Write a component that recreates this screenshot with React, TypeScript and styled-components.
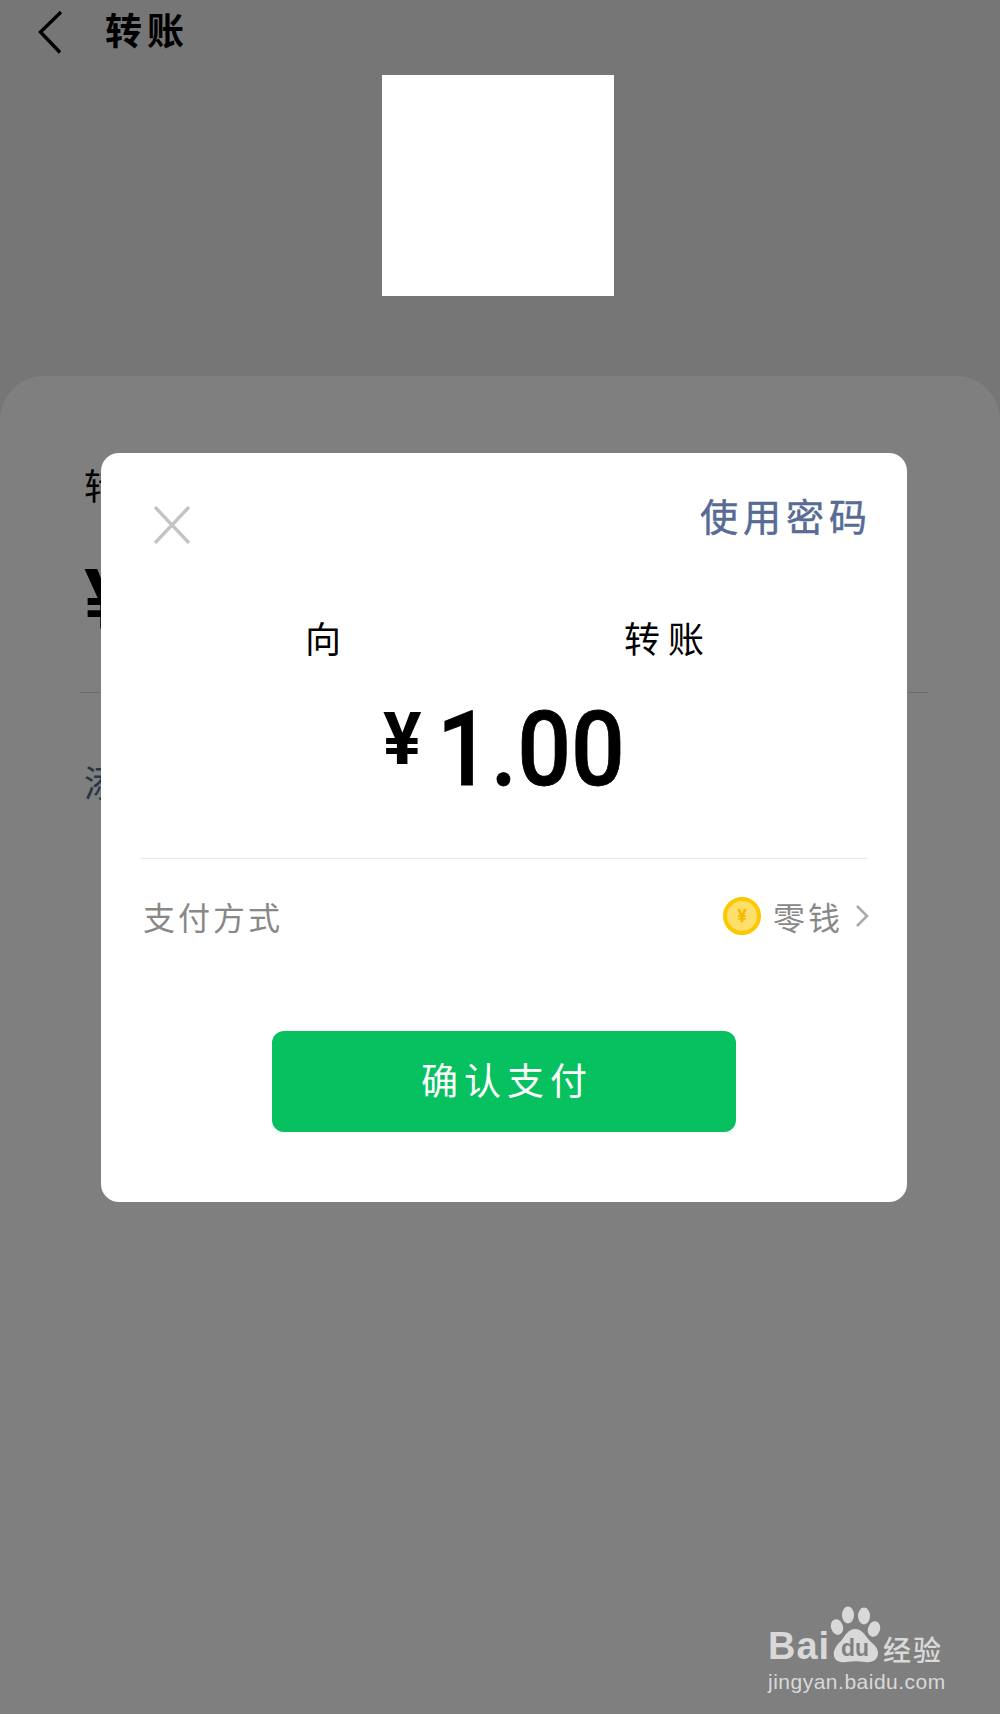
import React, { FC } from 'react';
import styled, { createGlobalStyle } from 'styled-components';

const CJK = `"Noto Sans CJK SC", "Liberation Sans", sans-serif`;

const GlobalStyle = createGlobalStyle`
    html, body {
        margin: 0;
        padding: 0;
        background: #808080;
    }
    body {
        font-family: ${CJK};
    }
`;

const Page = styled.div`
    position: relative;
    width: 1000px;
    height: 1714px;
    overflow: hidden;
    background: #ededed;
`;

const TopArea = styled.div`
    height: 376px;
    display: flex;
    flex-direction: column;
    align-items: flex-start;
`;

const Header = styled.div`
    height: 75px;
    padding-left: 38px;
    display: flex;
    align-items: flex-start;
    gap: 42px;
`;

const BackIcon = styled.svg`
    display: block;
    width: 25px;
    height: 43px;
    margin-top: 11px;
`;

const Title = styled.div`
    margin-top: 5px;
    font-size: 37px;
    line-height: 48px;
    font-weight: 700;
    letter-spacing: 5px;
    color: #000;
`;

/* blanked out in the screenshot, so it sits above the dimming layer */
const Avatar = styled.div`
    position: relative;
    z-index: 1;
    width: 232px;
    height: 221px;
    margin-left: 382px;
    background: #fff;
`;

const Sheet = styled.div`
    height: 1338px;
    padding: 84px 72px 0 84px;
    border-radius: 44px 44px 0 0;
    background: #fff;
`;

const FieldLabel = styled.div`
    font-size: 36px;
    line-height: 48px;
    color: #000;
`;

const BigYen = styled.div`
    margin-top: 49px;
    font-family: "Roboto", sans-serif;
    font-size: 84px;
    line-height: 88px;
    font-weight: 700;
    color: #000;
`;

const SheetLine = styled.div`
    margin: 47px 0 0 -4px;
    height: 1px;
    background: #d8d8d8;
`;

const RemarkLink = styled.div`
    margin-top: 64px;
    font-size: 36px;
    line-height: 48px;
    color: #576b95;
`;

const Overlay = styled.div`
    position: absolute;
    inset: 0;
    background: rgba(0, 0, 0, 0.5);
    padding: 453px 0 0 101px;
`;

const Modal = styled.div`
    width: 806px;
    height: 749px;
    box-sizing: border-box;
    padding: 40px 40px 0;
    border-radius: 18px;
    background: #fff;
`;

const ModalTop = styled.div`
    display: flex;
    justify-content: space-between;
    align-items: flex-start;
    padding-left: 12px;
    height: 50px;
`;

const CloseIcon = styled.svg`
    display: block;
    width: 38px;
    height: 38px;
    margin-top: 13px;
`;

const PasswordLink = styled.div`
    margin-top: -3px;
    margin-right: -5px;
    font-size: 38px;
    line-height: 50px;
    letter-spacing: 5px;
    color: #576b95;
    -webkit-text-stroke: 0.5px #576b95;
`;

const Payee = styled.div`
    margin-top: 70px;
    padding-left: 164px;
    display: flex;
    gap: 275px;
    font-size: 36px;
    line-height: 48px;
    letter-spacing: 8px;
    color: #000;
`;

const Amount = styled.div`
    margin-top: 31px;
    padding-left: 242px;
    display: flex;
    align-items: flex-start;
    gap: 15px;
    font-family: "Roboto", sans-serif;
    color: #000;
`;

const AmountYen = styled.span`
    margin-top: 6px;
    font-size: 72px;
    line-height: 84px;
    font-weight: 700;
`;

const AmountValue = styled.span`
    display: inline-block;
    font-size: 103px;
    line-height: 116px;
    font-weight: 500;
    -webkit-text-stroke: 0.8px #000;
    transform: scaleX(0.92);
    transform-origin: left top;
`;

const Divider = styled.div`
    margin-top: 50px;
    height: 1px;
    background: #e6e6e6;
`;

const PayRow = styled.div`
    margin-top: 35px;
    display: flex;
    align-items: center;
    justify-content: space-between;
    height: 44px;
    padding-left: 2px;
`;

const PayLabel = styled.div`
    font-size: 32px;
    line-height: 44px;
    letter-spacing: 3px;
    color: #888;
`;

const PayMethod = styled.div`
    display: flex;
    align-items: center;
    margin-right: -2px;
    font-size: 32px;
    line-height: 44px;
    letter-spacing: 3px;
    color: #888;
`;

const Coin = styled.div`
    width: 38px;
    height: 38px;
    box-sizing: border-box;
    margin-right: 12px;
    border: 4px solid #fcc800;
    border-radius: 50%;
    background: #fedf6b;
    display: flex;
    align-items: center;
    justify-content: center;
    font-family: "Roboto", sans-serif;
    font-size: 18px;
    font-weight: 700;
    letter-spacing: 0;
    color: #f5b800;
`;

const ChevronIcon = styled.svg`
    display: block;
    width: 14px;
    height: 24px;
    margin-left: 12px;
`;

const ConfirmButton = styled.button`
    display: flex;
    align-items: center;
    justify-content: center;
    width: 464px;
    height: 101px;
    margin: 93px 0 0 131px;
    border: 0;
    padding: 0 0 6px 6px;
    border-radius: 12px;
    background: #07c160;
    font-family: ${CJK};
    font-size: 37px;
    letter-spacing: 6px;
    color: #fff;
`;

const Watermark = styled.div`
    position: absolute;
    left: 768px;
    top: 1606px;
    width: 180px;
    color: #d9d9d9;
`;

const LogoRow = styled.div`
    display: flex;
    align-items: flex-end;
    height: 60px;
`;

const LogoBai = styled.span`
    width: 60px;
    font-family: "Liberation Sans", sans-serif;
    font-size: 38px;
    line-height: 40px;
    font-weight: 700;
    letter-spacing: 1px;
`;

const LogoPaw = styled.svg`
    display: block;
    width: 54px;
    height: 58px;
    margin-bottom: 2px;
`;

const LogoCn = styled.span`
    margin-left: 1px;
    font-size: 28px;
    line-height: 34px;
    font-weight: 500;
    letter-spacing: 2px;
    white-space: nowrap;
`;

const LogoUrl = styled.div`
    margin-top: 4px;
    font-family: "Liberation Sans", sans-serif;
    font-size: 21px;
    line-height: 24px;
    letter-spacing: 0.5px;
    white-space: nowrap;
`;

const App: FC = () => {
    return (
        <Page>
            <GlobalStyle />
            <TopArea>
                <Header>
                    <BackIcon viewBox="0 0 25 43">
                        <path d="M23 1 L2.5 21 L22 41.5" fill="none" stroke="#000" strokeWidth="3.4" />
                    </BackIcon>
                    <Title>转账</Title>
                </Header>
                <Avatar />
            </TopArea>
            <Sheet>
                <FieldLabel>转账金额</FieldLabel>
                <BigYen>¥</BigYen>
                <SheetLine />
                <RemarkLink>添加转账说明</RemarkLink>
            </Sheet>
            <Overlay>
                <Modal>
                    <ModalTop>
                        <CloseIcon viewBox="0 0 38 38">
                            <path d="M2 1 L36 37 M36 1 L2 37" fill="none" stroke="#c4c4c4" strokeWidth="3.4" />
                        </CloseIcon>
                        <PasswordLink>使用密码</PasswordLink>
                    </ModalTop>
                    <Payee>
                        <span>向</span>
                        <span>转账</span>
                    </Payee>
                    <Amount>
                        <AmountYen>¥</AmountYen>
                        <AmountValue>1.00</AmountValue>
                    </Amount>
                    <Divider />
                    <PayRow>
                        <PayLabel>支付方式</PayLabel>
                        <PayMethod>
                            <Coin>¥</Coin>
                            零钱
                            <ChevronIcon viewBox="0 0 14 24">
                                <path d="M2 2 L12 12 L2 22" fill="none" stroke="#aaa" strokeWidth="2.6" />
                            </ChevronIcon>
                        </PayMethod>
                    </PayRow>
                    <ConfirmButton>确认支付</ConfirmButton>
                </Modal>
            </Overlay>
            <Watermark>
                <LogoRow>
                    <LogoBai>Bai</LogoBai>
                    <LogoPaw viewBox="0 0 54 58">
                        <ellipse cx="9" cy="21" rx="6" ry="8" fill="#d9d9d9" transform="rotate(-18 9 21)" />
                        <ellipse cx="20" cy="9" rx="6" ry="8.5" fill="#d9d9d9" />
                        <ellipse cx="36" cy="10" rx="6" ry="8.5" fill="#d9d9d9" />
                        <ellipse cx="46" cy="23" rx="6" ry="8" fill="#d9d9d9" transform="rotate(18 46 23)" />
                        <path
                            d="M27 23 C20 23 17 30 13 35 C8 40 5 44 6 50 C7 55 12 57 18 56 C24 55 31 55 37 56 C44 57 50 54 50 47 C50 41 45 38 41 34 C37 29 34 23 27 23 Z"
                            fill="#d9d9d9"
                        />
                        <text x="27" y="50" textAnchor="middle" fontFamily="Liberation Sans, sans-serif" fontSize="23" fontWeight="700" fill="#808080">
                            du
                        </text>
                    </LogoPaw>
                    <LogoCn>经验</LogoCn>
                </LogoRow>
                <LogoUrl>jingyan.baidu.com</LogoUrl>
            </Watermark>
        </Page>
    );
};

export default App;
